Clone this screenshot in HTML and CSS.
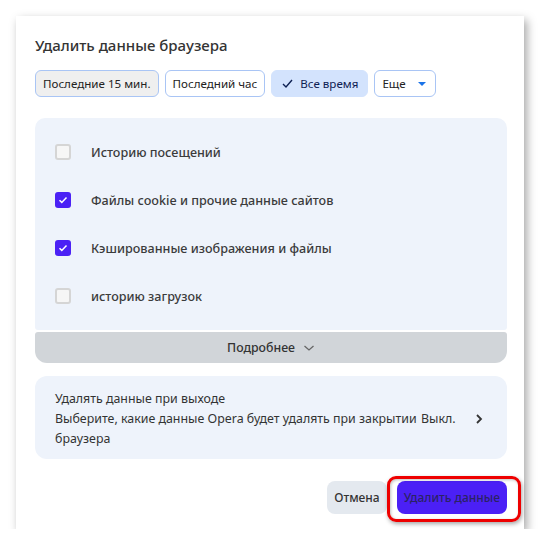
FILE: index.html
```html
<!DOCTYPE html>
<html lang="ru">
<head>
    <meta charset="UTF-8">
    <meta name="viewport" content="width=device-width, initial-scale=1.0">
    <title>Удалить данные браузера</title>
    <link rel="stylesheet" href="styles.css">
</head>
<body>
    <div class="dialog">
        <h1 class="title">Удалить данные браузера</h1>

        <div class="chips">
            <button class="chip chip-grey">Последние 15 мин.</button>
            <button class="chip">Последний час</button>
            <button class="chip chip-active">
                <svg class="chip-check" width="13" height="13" viewBox="0 0 13 13"><path d="M2 7l3 3 6-7" fill="none" stroke="#0e2153" stroke-width="1.4"/></svg>
                Все время
            </button>
            <button class="chip">Еще <span class="caret"></span></button>
        </div>

        <div class="options">
            <label class="option">
                <span class="box"></span>
                Историю посещений
            </label>
            <label class="option">
                <span class="box checked">
                    <svg width="10" height="10" viewBox="0 0 10 10"><path d="M1.5 5.2l2.3 2.2 4.7-5" fill="none" stroke="#fff" stroke-width="1.5"/></svg>
                </span>
                Файлы cookie и прочие данные сайтов
            </label>
            <label class="option">
                <span class="box checked">
                    <svg width="10" height="10" viewBox="0 0 10 10"><path d="M1.5 5.2l2.3 2.2 4.7-5" fill="none" stroke="#fff" stroke-width="1.5"/></svg>
                </span>
                Кэшированные изображения и файлы
            </label>
            <label class="option">
                <span class="box"></span>
                историю загрузок
            </label>
        </div>
        <div class="more">
            Подробнее
            <svg width="12" height="8" viewBox="0 0 12 8"><path d="M1.5 2l4.5 4 4.5-4" fill="none" stroke="#666" stroke-width="1.3"/></svg>
        </div>

        <div class="exit">
            <div class="exit-text">
                <div>Удалять данные при выходе</div>
                <div>Выберите, какие данные Opera будет удалять при закрытии браузера</div>
            </div>
            <span class="exit-state">Выкл.</span>
            <svg class="exit-arrow" width="8" height="12" viewBox="0 0 8 12"><path d="M2 2l4 4-4 4" fill="none" stroke="#333" stroke-width="1.8"/></svg>
        </div>

        <div class="actions">
            <button class="btn btn-cancel">Отмена</button>
            <div class="mark">
                <button class="btn btn-delete">Удалить данные</button>
                <span class="mark-frame"></span>
            </div>
        </div>
    </div>
</body>
</html>
```

FILE: styles.css
```css
body {
    margin: 0;
    background-color: #fff;
    font-family: "Noto Sans", "Open Sans", sans-serif;
    color: #333;
}
.dialog {
    width: 508px;
    height: 513px;
    box-sizing: border-box;
    margin: 16px 0 0 16px;
    padding: 19px 17px 0 19px;
    background-color: #fff;
    box-shadow: 3px 4px 9px rgba(0, 0, 0, 0.35);
}
.title {
    margin: 0;
    font-size: 15px;
    font-weight: 500;
    line-height: 20px;
    color: #333;
}
.chips {
    display: flex;
    gap: 6px;
    margin-top: 15px;
}
button {
    font-family: inherit;
    cursor: pointer;
}
.chip {
    display: flex;
    align-items: center;
    height: 27px;
    padding: 0 7px;
    border: 1px solid #a9c5f5;
    border-radius: 6px;
    background-color: #fff;
    font-size: 11.6px;
    color: #222;
}
.chip-grey {
    background-color: #efefef;
}
.chip-active {
    border-color: #d3e3fd;
    background-color: #d3e3fd;
    color: #0e2153;
    padding: 0 9px;
}
.chip-check {
    margin-right: 6px;
}
.caret {
    width: 0;
    height: 0;
    margin-left: 12px;
    margin-right: 2px;
    border-left: 4px solid transparent;
    border-right: 4px solid transparent;
    border-top: 4px solid #1a73e8;
}
.options {
    margin-top: 21px;
    padding: 10px 0;
    background-color: #eef3fb;
    border-radius: 10px 10px 3px 3px;
}
.option {
    display: flex;
    align-items: center;
    height: 48px;
    padding-left: 20px;
    font-size: 12.6px;
    font-weight: 500;
    color: #3b3b3b;
}
.box {
    display: flex;
    align-items: center;
    justify-content: center;
    width: 16px;
    height: 16px;
    box-sizing: border-box;
    margin-right: 20px;
    border: 2px solid #d5d5d5;
    border-radius: 3px;
    background-color: #f6f6f6;
}
.box.checked {
    border: none;
    background-color: #4b21f5;
}
.more {
    display: flex;
    align-items: center;
    justify-content: center;
    gap: 8px;
    height: 31px;
    margin-top: 2px;
    background-color: #d1d5d9;
    border-radius: 3px 3px 12px 12px;
    font-size: 12.3px;
    font-weight: 500;
    color: #333;
}
.exit {
    display: flex;
    align-items: center;
    margin-top: 13px;
    padding: 13px 24px 10px 20px;
    background-color: #eef3fb;
    border-radius: 12px;
    font-size: 12.4px;
    line-height: 20px;
    color: #333;
}
.exit-text {
    width: 366px;
}
.exit-arrow {
    margin-left: auto;
}
.actions {
    display: flex;
    justify-content: flex-end;
    gap: 10px;
    margin-top: 22px;
}
.btn {
    height: 33px;
    border: none;
    border-radius: 8px;
    font-size: 12px;
    font-weight: 500;
}
.btn-cancel {
    padding: 0 7px;
    background-color: #e4e9ef;
    color: #333;
}
.btn-delete {
    padding: 0 7px;
    background-color: #4b20f6;
    color: #2b2266;
}
.mark {
    position: relative;
}
.mark-frame {
    position: absolute;
    top: -5px;
    left: -10px;
    right: -14px;
    bottom: -8px;
    border: 3px solid #ee0000;
    border-radius: 9px;
    box-shadow: 1px 2px 4px rgba(0, 0, 0, 0.35), inset 1px 1px 3px rgba(0, 0, 0, 0.25);
    pointer-events: none;
}
```
